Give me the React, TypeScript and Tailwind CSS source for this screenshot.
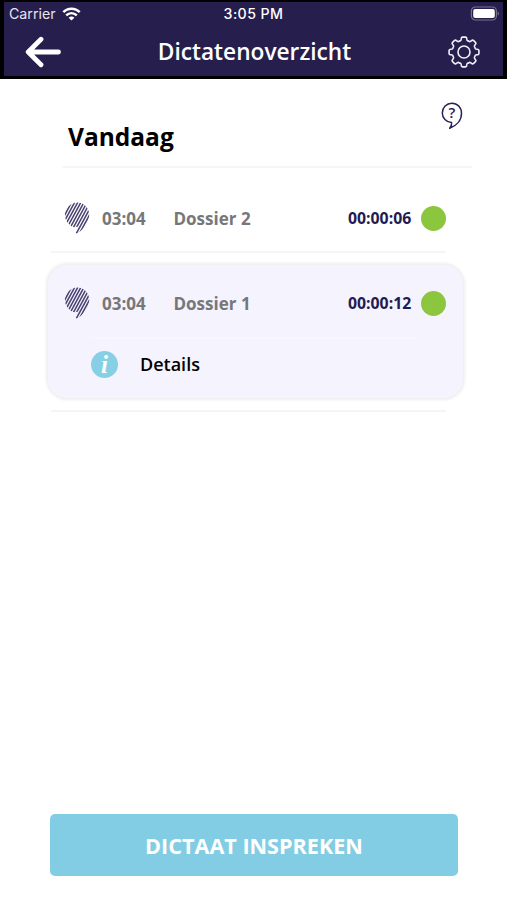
import React from "react";

const point = (radius: number, degrees: number) => {
  const a = (degrees * Math.PI) / 180;
  return `${(16 + radius * Math.sin(a)).toFixed(2)} ${(16 - radius * Math.cos(a)).toFixed(2)}`;
};

// Eight rounded teeth joined by shallow scalloped valleys.
const gearPath =
  Array.from({ length: 8 }, (_, i) => {
    const c = i * 45;
    return [
      `${i === 0 ? "M" : "L"}${point(13.2, c - 12)}`,
      `Q${point(15, c - 11)} ${point(15, c - 6)}`,
      `L${point(15, c + 6)}`,
      `Q${point(15, c + 11)} ${point(13.2, c + 12)}`,
      `Q${point(11.5, c + 15)} ${point(11.7, c + 19)}`,
      `Q${point(12.2, c + 22.5)} ${point(11.7, c + 26)}`,
      `Q${point(11.5, c + 30)} ${point(13.2, c + 33)}`,
    ].join("");
  }).join("") + "Z";

function Gear() {
  return (
    <svg className="h-8 w-8" viewBox="0 0 32 32" fill="none" stroke="#f1eff8" strokeWidth="1.6" strokeLinejoin="round">
      <path d={gearPath} />
      <circle cx="16" cy="16" r="6" />
    </svg>
  );
}

function BackArrow() {
  return (
    <svg className="h-8 w-9" viewBox="0 0 36 32" fill="none" stroke="#fff" strokeWidth="4.8" strokeLinecap="round" strokeLinejoin="round">
      <path d="M33.5 16H3.5M16 3.2L3.2 16L16 28.8" />
    </svg>
  );
}

function Wifi() {
  return (
    <svg className="h-[14px] w-[19px]" viewBox="0 0 19 14" fill="none" stroke="#fff" strokeWidth="2.5">
      <path d="M1.3 5.2C5.8 .5 13.2 .5 17.7 5.2" />
      <path d="M4.2 8.4C7.3 5.4 11.7 5.4 14.8 8.4" />
      <path d="M9.5 13.6L6.6 10.7C8.2 9.1 10.8 9.1 12.4 10.7Z" fill="#fff" stroke="none" />
    </svg>
  );
}

function Battery() {
  return (
    <svg className="h-[15px] w-[30px]" viewBox="0 0 30 15">
      <rect x="1.4" y="1" width="25" height="13" rx="4" fill="none" stroke="#77718f" strokeWidth="1.2" />
      <rect x="3.2" y="2.9" width="21.6" height="9.2" rx="2" fill="#fff" />
      <path d="M27.7 5.2Q30.2 7.5 27.7 9.8Z" fill="#77718f" />
    </svg>
  );
}

function HelpBubble() {
  return (
    <svg className="h-[28px] w-[22px]" viewBox="0 0 22 28">
      <path
        d="M10.6 20.6C5.2 20.2 1.3 16 1.3 11C1.3 5.4 5.5 1.2 10.9 1.2C16.3 1.2 20.5 5.4 20.5 11.4C20.5 18 15.8 23.6 8.7 26.2C10.2 24.6 10.9 22.9 10.6 20.6Z"
        fill="none"
        stroke="#2a2156"
        strokeWidth="1.5"
        strokeLinejoin="round"
      />
      <text x="11" y="16.4" textAnchor="middle" className="font-['Open_Sans',sans-serif] text-[15px] font-semibold" fill="#2a2156">
        ?
      </text>
    </svg>
  );
}

function StripedBubble({ id }: { id: string }) {
  return (
    <svg className="h-8 w-[26px] shrink-0" viewBox="0 0 26 32">
      <clipPath id={id}>
        <path d="M13.5 .4C20 .4 25.4 6 25.2 13C25 20 20 27 13.4 31.6L11.2 31L14.3 24.6C10 26.3 7 24.5 5 22C2.2 19.5 .9 16.5 .9 12.8C.9 6 6.5 .4 13.5 .4Z" />
      </clipPath>
      <g clipPath={`url(#${id})`} stroke="#48406f" strokeWidth="1.55">
        {Array.from({ length: 13 }, (_, i) => {
          const x = -12.8 + i * 3.1;
          return <path key={i} d={`M${x} 32L${x + 17.5} 0`} />;
        })}
      </g>
    </svg>
  );
}

function Entry({ id, title, duration }: { id: string; title: string; duration: string }) {
  return (
    <div className="flex h-8 items-center">
      <StripedBubble id={id} />
      <span className="ml-3 w-[71.5px] pt-0.5 text-[17px] font-bold leading-8 text-[#777779]">03:04</span>
      <span className="w-[174.5px] pt-0.5 text-[17px] font-bold leading-8 text-[#777779]">{title}</span>
      <span className="w-[73px] text-[15.8px] font-bold leading-8 text-[#231b50]">{duration}</span>
      <span className="h-[25px] w-[25px] shrink-0 rounded-full bg-[#8cc63e]" />
    </div>
  );
}

export default function App() {
  return (
    <div className="flex h-[900px] w-[507px] flex-col overflow-hidden bg-white font-['Open_Sans','Noto_Sans',sans-serif]">
      <header className="h-[79px] shrink-0 border-x-4 border-t-2 border-b-[3px] border-black bg-[#261e4d] text-white">
        <div className="grid h-6 grid-cols-3 items-center font-['Inter',sans-serif] text-[14.2px]">
          <div className="flex items-center gap-1.5 pl-[5px] text-[#e7e5ef]">
            <span>Carrier</span>
            <Wifi />
          </div>
          <div className="text-center font-medium tracking-[0.4px]">3:05 PM</div>
          <div className="flex justify-end pb-0.5 pr-[3px]">
            <Battery />
          </div>
        </div>
        <div className="flex h-[51px] items-center justify-between pl-[21px] pr-[23px]">
          <BackArrow />
          <h1 className="text-[22.7px] font-semibold leading-8">Dictatenoverzicht</h1>
          <Gear />
        </div>
      </header>

      <main className="flex grow flex-col">
        <section className="ml-[62px] flex h-[89px] w-[410px] justify-between border-b-2 border-[#f6f6f6] pl-1.5 pr-[9px]">
          <h2 className="pt-[42px] text-[24.5px] font-bold leading-8 text-black">Vandaag</h2>
          <div className="pt-[23px]">
            <HelpBubble />
          </div>
        </section>

        <div className="ml-[51px] h-[85px] w-[395px] border-b-2 border-[#f5f5f5] pl-[13px] pt-[34px]">
          <Entry id="bubble-2" title="Dossier 2" duration="00:00:06" />
        </div>

        <div className="ml-[48px] mt-3 h-[133px] w-[415px] rounded-[19px] bg-[#f5f3fe] pl-4 pt-[22px] shadow-[0_0_3px_2px_#eeeeee]">
          <Entry id="bubble-1" title="Dossier 1" duration="00:00:12" />
          <div className="ml-[27px] mt-[18px] h-[2px] w-[325px] bg-[#f8f6fd]" />
          <div className="ml-[27px] mt-3 flex items-center">
            <span className="flex h-[27px] w-[27px] items-center justify-center rounded-full bg-[#87cfe4] font-['Liberation_Serif',serif] text-[25px] font-bold italic leading-[27px] text-white">
              i
            </span>
            <span className="ml-[22px] text-[18px] font-semibold leading-[27px] text-black">Details</span>
          </div>
        </div>
        <div className="ml-[51px] mt-3 h-[2px] w-[395px] bg-[#f5f5f5]" />

        <button className="mb-6 ml-[50px] mt-auto h-[62px] w-[408px] rounded-[5px] bg-[#83cde4] pt-0.5 text-[21.6px] font-bold text-white">
          DICTAAT INSPREKEN
        </button>
      </main>
    </div>
  );
}
